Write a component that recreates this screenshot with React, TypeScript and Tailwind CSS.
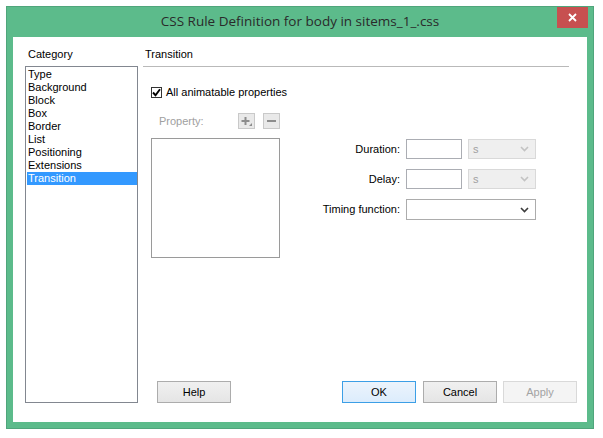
import React from "react";

const categories = [
  "Type",
  "Background",
  "Block",
  "Box",
  "Border",
  "List",
  "Positioning",
  "Extensions",
  "Transition",
];

function Chevron({ disabled }: { disabled?: boolean }) {
  return (
    <svg width="9" height="6" viewBox="0 0 9 6" className="shrink-0">
      <path
        d="M1 1 L4.5 4.5 L8 1"
        fill="none"
        stroke={disabled ? "#c3c3c3" : "#3c3c3c"}
        strokeWidth="1.6"
      />
    </svg>
  );
}

function Button({ label, primary, disabled }: { label: string; primary?: boolean; disabled?: boolean }) {
  let cls = "border-[#acacac] bg-gradient-to-b from-[#f0f0f0] to-[#e5e5e5] text-black";
  if (primary) cls = "border-[#3c9fe6] bg-gradient-to-b from-[#ecf4fc] to-[#dcecfc] text-black";
  if (disabled) cls = "border-[#d9d9d9] bg-[#f4f4f4] text-[#a3a3a3]";
  return (
    <div className={`w-[74px] h-[22px] border flex items-center justify-center text-[11px] ${cls}`}>
      {label}
    </div>
  );
}

export default function App() {
  return (
    <div
      className="w-[603px] h-[438px] bg-white overflow-hidden pt-[6px] pl-[6px]"
      style={{ fontFamily: '"Liberation Sans", Arial, sans-serif' }}
    >
      <div className="w-[588px] border border-[#4fa57b] bg-[#5cbb8b] flex flex-col">
        {/* Title bar */}
        <div className="relative h-[30px] flex items-center justify-center">
          <span
            className="text-[13.5px] text-[#2a2a2a] pb-[1px]"
            style={{ fontFamily: '"Open Sans", "Noto Sans", sans-serif' }}
          >
            CSS Rule Definition for body in sitems_1_.css
          </span>
          <div className="absolute right-[5px] top-0 w-[31px] h-[21px] bg-[#c75050] flex items-center justify-center">
            <svg width="9" height="9" viewBox="0 0 9 9">
              <path d="M1 1 L8 8 M8 1 L1 8" stroke="#fff" strokeWidth="1.8" />
            </svg>
          </div>
        </div>

        <div className="px-[6px] pb-[6px]">
          <div className="h-[385px] bg-white flex pl-[12px] pt-[11px] text-[11px] text-black">
            {/* Category column */}
            <div className="w-[113px] flex flex-col">
              <div className="h-[13px] leading-[13px] pl-[3px] mb-[5px]">Category</div>
              <div className="h-[337px] border border-[#828790] pt-[1px] pl-[1px]">
                {categories.map((c) => (
                  <div
                    key={c}
                    className={`h-[13px] leading-[13px] pl-[1px] ${
                      c === "Transition" ? "bg-[#3399ff] text-white" : ""
                    }`}
                  >
                    {c}
                  </div>
                ))}
              </div>
            </div>

            {/* Panel */}
            <div className="ml-[5px] w-[434px] flex flex-col h-[355px]">
              <div className="h-[13px] leading-[13px] pl-[2px] mb-[5px]">Transition</div>
              <div className="h-px w-[426px] bg-[#b9b9b9]" />

              <div className="mt-[20px] pl-[8px] flex items-center h-[11px]">
                <div className="w-[11px] h-[11px] border border-[#333] bg-white flex items-center justify-center">
                  <svg width="9" height="9" viewBox="0 0 9 9">
                    <path d="M1 4.5 L3.5 7.2 L8 1.2" fill="none" stroke="#000" strokeWidth="1.9" />
                  </svg>
                </div>
                <span className="ml-[4px]">All animatable properties</span>
              </div>

              <div className="mt-[15px] h-[16px] flex items-center">
                <span className="pl-[16px] w-[95px] text-[#a0a0a0]">Property:</span>
                <div className="w-[17px] h-[16px] border border-[#c9c9c9] bg-[#e9e9e9] flex items-center justify-center">
                  <svg width="13" height="12" viewBox="0 0 13 12">
                    <path d="M5.5 2 V10 M1.5 6 H9.5" stroke="#8d8d8d" strokeWidth="2" />
                    <path d="M9 11 L12 11 L12 8 Z" fill="#8d8d8d" />
                  </svg>
                </div>
                <div className="ml-[8px] w-[17px] h-[16px] border border-[#c9c9c9] bg-[#e9e9e9] flex items-center justify-center">
                  <svg width="11" height="4" viewBox="0 0 11 4">
                    <path d="M1 2 H10" stroke="#8d8d8d" strokeWidth="2" />
                  </svg>
                </div>
              </div>

              <div className="mt-[9px] flex">
                <div className="ml-[8px] w-[129px] h-[120px] border border-[#9a9a9a] bg-white" />
                <div className="grid grid-cols-[121px_56px_68px] gap-x-[6px] gap-y-[10px] content-start mt-[1px] -ml-[1px]">
                  <span className="flex items-center justify-end h-[20px]">Duration:</span>
                  <div className="h-[20px] border border-[#abadb3] bg-white" />
                  <div className="h-[20px] border border-[#d9d9d9] bg-[#efefef] flex items-center justify-between pl-[4px] pr-[6px] text-[#a0a0a0]">
                    <span>s</span>
                    <Chevron disabled />
                  </div>

                  <span className="flex items-center justify-end h-[20px]">Delay:</span>
                  <div className="h-[20px] border border-[#abadb3] bg-white" />
                  <div className="h-[20px] border border-[#d9d9d9] bg-[#efefef] flex items-center justify-between pl-[4px] pr-[6px] text-[#a0a0a0]">
                    <span>s</span>
                    <Chevron disabled />
                  </div>

                  <span className="flex items-center justify-end h-[21px]">Timing function:</span>
                  <div className="col-span-2 h-[21px] border border-[#acacac] bg-white flex items-center justify-end pr-[6px]">
                    <Chevron />
                  </div>
                </div>
              </div>

              <div className="mt-auto flex">
                <div className="ml-[14px]">
                  <Button label="Help" />
                </div>
                <div className="ml-[111px]">
                  <Button label="OK" primary />
                </div>
                <div className="ml-[7px]">
                  <Button label="Cancel" />
                </div>
                <div className="ml-[6px]">
                  <Button label="Apply" disabled />
                </div>
              </div>
            </div>
          </div>
        </div>
      </div>
    </div>
  );
}
